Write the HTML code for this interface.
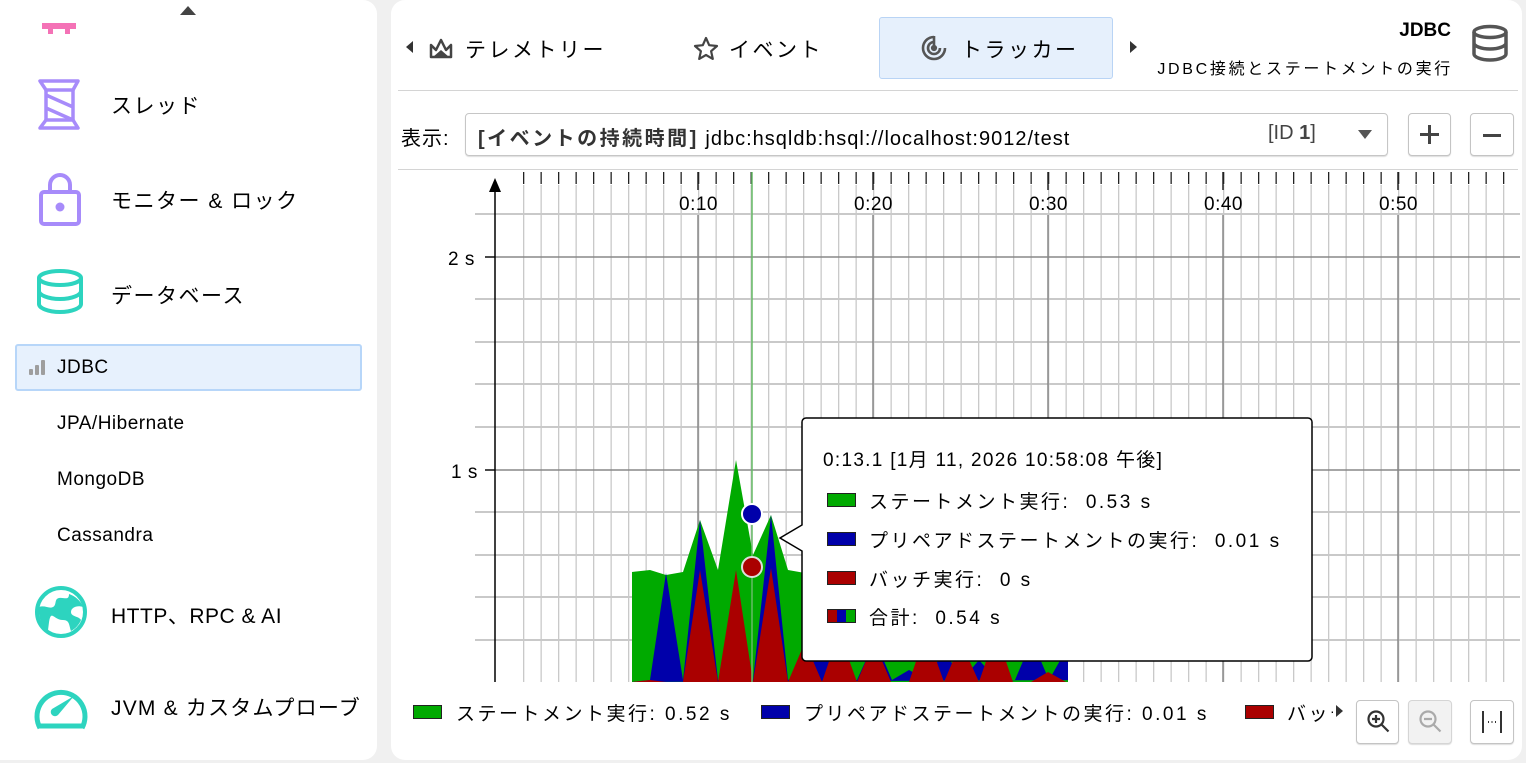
<!DOCTYPE html>
<html><head><meta charset="utf-8"><style>
*{box-sizing:border-box;margin:0;padding:0}
body{width:1526px;height:763px;background:#f0f0f0;font-family:"Liberation Sans","Noto Sans CJK JP",sans-serif;color:#000;position:relative;overflow:hidden}
.abs{position:absolute}
.side{left:0;top:0;width:377px;height:760px;background:#fff;border-radius:0 14px 14px 0}
.main{left:391px;top:0;width:1131px;height:760px;background:#fff;border-radius:14px}
.t{position:absolute;white-space:nowrap}
.big{font-size:21px;letter-spacing:1.5px}
.tt{font-size:19px;letter-spacing:2.5px}
.btn{position:absolute;border:1px solid #c4c4c4;border-radius:4px;background:#fff;box-shadow:0 1px 1px #ddd}
</style></head><body>
<div class="abs side"></div>
<div class="abs main"></div>

<!-- sidebar -->
<div class="t" style="left:180px;top:6px;width:0;height:0;border-left:8px solid transparent;border-right:8px solid transparent;border-bottom:9px solid #444"></div>
<svg class="abs" style="left:36px;top:20px" width="46" height="16"><rect x="6" y="3" width="34" height="6" fill="#f472b6"/><rect x="12" y="8" width="5" height="6" fill="#f472b6"/><rect x="29" y="8" width="5" height="6" fill="#f472b6"/></svg>
<svg class="abs" style="left:36px;top:78px" width="48" height="54" fill="none" stroke="#a78bfa" stroke-width="3.5"><path d="M4 3h38l-5 9H10z" stroke-linejoin="round"/><path d="M10 12v30M37 12v30M10 17l27 12M10 30l27 12"/><path d="M10 42h27l5 8H4z" stroke-linejoin="round"/></svg>
<div class="t big" style="left:111px;top:90px">スレッド</div>
<svg class="abs" style="left:38px;top:170px" width="44" height="56"><path d="M12 22V15a10 10 0 0 1 20 0v7" fill="none" stroke="#a78bfa" stroke-width="4"/><rect x="3" y="22" width="38" height="32" rx="3" fill="none" stroke="#a78bfa" stroke-width="4"/><circle cx="22" cy="37" r="4.5" fill="#a78bfa"/></svg>
<div class="t big" style="left:111px;top:185px">モニター &amp; ロック</div>
<svg class="abs" style="left:36px;top:268px" width="50" height="50" fill="none" stroke="#2dd4bf" stroke-width="4"><ellipse cx="24" cy="10" rx="21" ry="7"/><path d="M3 10v26c0 4 9 8 21 8s21-4 21-8V10M3 23c0 4 9 8 21 8s21-4 21-8"/></svg>
<div class="t big" style="left:111px;top:280px">データベース</div>
<div class="abs" style="left:15px;top:344px;width:347px;height:47px;background:#e7f1fd;border:2px solid #b7d6f9;border-radius:3px"></div>
<svg class="abs" style="left:28px;top:358px" width="20" height="20" fill="#9e9e9e"><rect x="1" y="11" width="4" height="6" rx="1"/><rect x="7" y="7" width="4" height="10" rx="1"/><rect x="13" y="2" width="4" height="15" rx="1"/></svg>
<div class="t" style="left:57px;top:357px;font-size:19px;letter-spacing:.5px">JDBC</div>
<div class="t" style="left:57px;top:413px;font-size:19px;letter-spacing:.5px">JPA/Hibernate</div>
<div class="t" style="left:57px;top:469px;font-size:19px;letter-spacing:.5px">MongoDB</div>
<div class="t" style="left:57px;top:525px;font-size:19px;letter-spacing:.5px">Cassandra</div>
<svg class="abs" style="left:34px;top:585px" width="54" height="54"><circle cx="27" cy="27" r="24" fill="none" stroke="#2dd4bf" stroke-width="4"/><path d="M5 22c6-2 10 2 14 0s1-8 6-9 10 3 10-4c6 2 12 7 14 13-5-2-12 0-12 5s8 4 10 8c-2 5-6 9-10 11-2-5-1-11-8-11s-10-6-12-4-2 8-3 14C8 41 4 34 5 22z" fill="#2dd4bf"/></svg>
<div class="t big" style="left:111px;top:600px;letter-spacing:.5px">HTTP、RPC &amp; AI</div>
<svg class="abs" style="left:34px;top:684px" width="54" height="46"><path d="M6 44A24 24 0 1 1 48 44" fill="none" stroke="#2dd4bf" stroke-width="5"/><path d="M4 42h46" stroke="#2dd4bf" stroke-width="5"/><path d="M40 12L24 31a4 4 0 1 1-6-6z" fill="#2dd4bf"/></svg>
<div class="t big" style="left:111px;top:692px;letter-spacing:1.2px">JVM &amp; カスタムプローブ</div>

<!-- top tabs -->
<div class="t" style="left:406px;top:41px;width:0;height:0;border-top:6px solid transparent;border-bottom:6px solid transparent;border-right:7px solid #333"></div>
<svg class="abs" style="left:429px;top:36px" width="24" height="24"><path d="M2 21V9l5 5 5-10 5 10 5-5v12z" fill="none" stroke="#444" stroke-width="2.5" stroke-linejoin="round"/><path d="M4 21l8-7 8 7z" fill="#444"/></svg>
<div class="t big" style="left:465px;top:34px;letter-spacing:2.5px">テレメトリー</div>
<svg class="abs" style="left:693px;top:36px" width="26" height="26"><path d="M13 2l3.2 7.2 7.8.8-5.9 5.2 1.7 7.7L13 19l-6.8 3.9 1.7-7.7L2 10l7.8-.8z" fill="none" stroke="#444" stroke-width="2.2" stroke-linejoin="round"/></svg>
<div class="t big" style="left:729px;top:34px;letter-spacing:2.5px">イベント</div>
<div class="abs" style="left:879px;top:17px;width:234px;height:62px;background:#e6f0fc;border:1px solid #b9d4f5;border-radius:3px"></div>
<svg class="abs" style="left:920px;top:34px" width="28" height="28" fill="none" stroke="#555" stroke-width="2.6"><path d="M14 3A11 11 0 1 0 25 14"/><path d="M14 8a6 6 0 1 0 6 6"/><circle cx="14" cy="14" r="1.8" fill="#555"/><path d="M14 14V2"/></svg>
<div class="t big" style="left:961px;top:34px;letter-spacing:2.5px">トラッカー</div>
<div class="t" style="left:1130px;top:41px;width:0;height:0;border-top:6px solid transparent;border-bottom:6px solid transparent;border-left:7px solid #333"></div>
<div class="t" style="right:75px;top:20px;font-size:19px;font-weight:bold">JDBC</div>
<div class="t" style="right:73px;top:55px;font-size:16px;letter-spacing:2.7px">JDBC接続とステートメントの実行</div>
<svg class="abs" style="left:1470px;top:24px" width="40" height="40" fill="none" stroke="#555" stroke-width="3.5"><ellipse cx="20" cy="8" rx="16" ry="5.5"/><path d="M4 8v22c0 3 7 6 16 6s16-3 16-6V8M4 19c0 3 7 6 16 6s16-3 16-6"/></svg>
<div class="abs" style="left:398px;top:90px;width:1120px;height:1px;background:#d4d4d4"></div>

<!-- combobox -->
<div class="t" style="left:401px;top:122px;font-size:20px;letter-spacing:1px">表示:</div>
<div class="abs" style="left:465px;top:113px;width:923px;height:43px;border:1px solid #c6c6c6;border-radius:4px;box-shadow:0 1px 1px #ddd"></div>
<div class="t" style="left:478px;top:122px;font-size:20px;letter-spacing:1px"><span style="color:#333;font-weight:bold;letter-spacing:2.5px">[イベントの持続時間]</span> jdbc:hsqldb:hsql://localhost:9012/test</div>
<div class="t" style="left:1268px;top:122px;font-size:20px;color:#444">[ID <b>1</b>]</div>
<div class="t" style="left:1358px;top:130px;width:0;height:0;border-left:7px solid transparent;border-right:7px solid transparent;border-top:9px solid #555"></div>
<div class="btn" style="left:1408px;top:113px;width:43px;height:43px"></div>
<div class="abs" style="left:1420px;top:133px;width:19px;height:2.5px;background:#444"></div>
<div class="abs" style="left:1428.3px;top:125px;width:2.5px;height:19px;background:#444"></div>
<div class="btn" style="left:1470px;top:113px;width:44px;height:43px"></div>
<div class="abs" style="left:1483px;top:134px;width:18px;height:2.5px;background:#444"></div>
<div class="abs" style="left:398px;top:169px;width:1120px;height:1px;background:#d4d4d4"></div>

<!-- chart -->
<svg class="abs" style="left:0;top:0" width="1526" height="763">
<defs><pattern id="vg" x="523" y="0" width="17.5" height="10" patternUnits="userSpaceOnUse"><rect x="0" y="0" width="1.3" height="10" fill="#c9c9c9"/></pattern>
<pattern id="tk" x="523" y="0" width="17.5" height="10" patternUnits="userSpaceOnUse"><rect x="0" y="0" width="1.3" height="10" fill="#222"/></pattern>
<clipPath id="cp"><rect x="600" y="300" width="468" height="383"/></clipPath></defs>
<rect x="522" y="185" width="998" height="497" fill="url(#vg)"/>
<rect x="522" y="172" width="998" height="12" fill="url(#tk)"/>
<g stroke="#c9c9c9" stroke-width="2">
<line x1="475" y1="214" x2="1520" y2="214"/><line x1="475" y1="299" x2="1520" y2="299"/><line x1="475" y1="342" x2="1520" y2="342"/><line x1="475" y1="384" x2="1520" y2="384"/><line x1="475" y1="427" x2="1520" y2="427"/><line x1="475" y1="512" x2="1520" y2="512"/><line x1="475" y1="555" x2="1520" y2="555"/><line x1="475" y1="597" x2="1520" y2="597"/><line x1="475" y1="640" x2="1520" y2="640"/>
</g>
<g stroke="#888" stroke-width="1.5">
<line x1="698" y1="215" x2="698" y2="682"/><line x1="873" y1="215" x2="873" y2="682"/><line x1="1048" y1="215" x2="1048" y2="682"/><line x1="1223" y1="215" x2="1223" y2="682"/><line x1="1398" y1="215" x2="1398" y2="682"/>
<line x1="485" y1="257" x2="1520" y2="257"/><line x1="485" y1="470" x2="1520" y2="470"/>
</g>
<g stroke="#222" stroke-width="1.5"><line x1="698" y1="172" x2="698" y2="190"/><line x1="873" y1="172" x2="873" y2="190"/><line x1="1048" y1="172" x2="1048" y2="190"/><line x1="1223" y1="172" x2="1223" y2="190"/><line x1="1398" y1="172" x2="1398" y2="190"/><line x1="485" y1="257" x2="495" y2="257"/><line x1="485" y1="470" x2="495" y2="470"/></g>
<line x1="495" y1="190" x2="495" y2="682" stroke="#000" stroke-width="1.5"/>
<path d="M495 178l-6 14h12z" fill="#000"/>
<g font-size="19" font-family="Liberation Sans" letter-spacing="0.5">
<text x="679" y="210">0:10</text>
<text x="854" y="210">0:20</text>
<text x="1029" y="210">0:30</text>
<text x="1204" y="210">0:40</text>
<text x="1379" y="210">0:50</text>
<text x="448" y="265">2 s</text>
<text x="451" y="478">1 s</text></g>
<g clip-path="url(#cp)">
<path d="M632 682V572l18-2 16 5 17-3 17-52 18 50 18-110 17 95 18-40 17 55 17 3 17-10 18 5 17 0 18 10 17 5 17 0 18 10 17-5 18 0 17 10 18 5 17-15 18 10 17 5 17 5 17-10 18 5V682z" fill="#00aa00"/>
<path d="M632 682l18-2 16-107 17 107 17-160 18 160 18-2 17 2 18-165 17 165 17-10 17-100 18 110 17 0 18-40 17 40 17-10 18 10 17-30 18 30 17-20 18 20 18 0 17-40 17 40 17-30 18 30z" fill="#0000aa"/>
<path d="M632 682l18-2 16 2 17 0 17-112 18 112 18-112 17 112 18-114 17 114 17-40 17 40 17-50 18 50 17-40 17 40 18 0 17-50 18 50 17-40 18 40 17-50 17 50 18 0 17-10 18 10z" fill="#aa0000"/>
</g>
<line x1="752" y1="172" x2="752" y2="682" stroke="#66bb66" stroke-width="1.5"/>
<circle cx="752" cy="514" r="10" fill="#0000aa" stroke="#fff" stroke-width="2"/>
<circle cx="752" cy="567" r="10" fill="#aa0000" stroke="#ddd" stroke-width="2"/>
<path d="M806 418h502a4 4 0 0 1 4 4v235a4 4 0 0 1-4 4H806a4 4 0 0 1-4-4V551l-22-13 22-13V422a4 4 0 0 1 4-4z" fill="#fff" stroke="#000" stroke-width="1.5"/>
</svg>
<div class="t" style="left:823px;top:445px;font-size:19px;letter-spacing:1.3px">0:13.1 [1月 11, 2026 10:58:08 午後]</div>
<div class="abs" style="left:827px;top:493px;width:29px;height:14px;background:#00aa00;border:1px solid #222"></div>
<div class="t tt" style="left:869px;top:487px">ステートメント実行:&nbsp; 0.53 s</div>
<div class="abs" style="left:827px;top:532px;width:29px;height:14px;background:#0000aa;border:1px solid #222"></div>
<div class="t tt" style="left:869px;top:526px">プリペアドステートメントの実行:&nbsp; 0.01 s</div>
<div class="abs" style="left:827px;top:571px;width:29px;height:14px;background:#aa0000;border:1px solid #222"></div>
<div class="t tt" style="left:869px;top:565px">バッチ実行:&nbsp; 0 s</div>
<div class="abs" style="left:827px;top:609px;width:29px;height:14px;border:1px solid #222;background:linear-gradient(90deg,#aa0000 33%,#0000aa 33% 66%,#00aa00 66%)"></div>
<div class="t tt" style="left:869px;top:603px">合計:&nbsp; 0.54 s</div>

<!-- legend -->
<div class="abs" style="left:413px;top:705px;width:29px;height:14px;background:#00aa00;border:1px solid #222"></div>
<div class="t tt" style="left:456px;top:699px">ステートメント実行: 0.52 s</div>
<div class="abs" style="left:761px;top:705px;width:29px;height:14px;background:#0000aa;border:1px solid #222"></div>
<div class="t tt" style="left:804px;top:699px">プリペアドステートメントの実行: 0.01 s</div>
<div class="abs" style="left:1245px;top:705px;width:29px;height:14px;background:#aa0000;border:1px solid #222"></div>
<div class="t tt" style="left:1287px;top:699px;width:46px;overflow:hidden">バッチ</div>
<div class="t" style="left:1336px;top:705px;width:0;height:0;border-top:6px solid transparent;border-bottom:6px solid transparent;border-left:7px solid #333"></div>
<div class="btn" style="left:1356px;top:700px;width:43px;height:44px"></div>
<svg class="abs" style="left:1366px;top:709px" width="26" height="26" fill="none" stroke="#333" stroke-width="2.2"><circle cx="10" cy="10" r="7.5"/><path d="M15.5 15.5l7 7M6 10h8M10 6v8"/></svg>
<div class="btn" style="left:1408px;top:700px;width:44px;height:44px;background:#f2f2f2;border-color:#d5d5d5"></div>
<svg class="abs" style="left:1418px;top:709px" width="26" height="26" fill="none" stroke="#aaa" stroke-width="2.2"><circle cx="10" cy="10" r="7.5"/><path d="M15.5 15.5l7 7M6 10h8"/></svg>
<div class="btn" style="left:1470px;top:700px;width:44px;height:44px"></div>
<svg class="abs" style="left:1480px;top:709px" width="24" height="26" stroke="#333" stroke-width="2"><path d="M3 2v22M21 2v22"/><path d="M8 13h1M11.5 13h1M15 13h1"/></svg>
</body></html>
